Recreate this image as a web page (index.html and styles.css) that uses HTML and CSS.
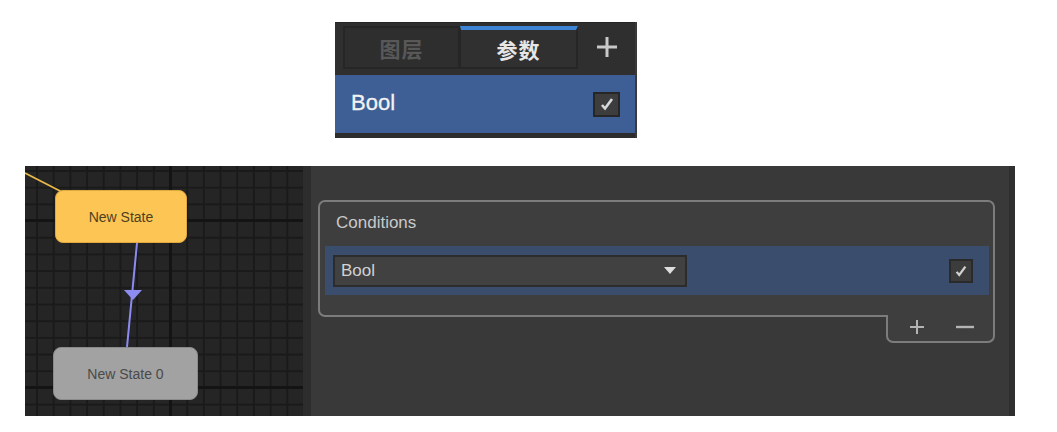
FILE: index.html
```html
<!DOCTYPE html>
<html>
<head>
<meta charset="utf-8">
<link rel="stylesheet" href="styles.css">
</head>
<body>
<div class="page">
  <div class="params">
    <div class="tabs">
      <div class="tab">图层</div>
      <div class="tab active">参数</div>
      <div class="add">
        <svg width="22" height="22" viewBox="0 0 22 22"><path d="M11 1v20M1 11h20" stroke="#c8c8c8" stroke-width="3"/></svg>
      </div>
    </div>
    <div class="param-row">
      <span class="param-name">Bool</span>
      <span class="check big">
        <svg width="16" height="16" viewBox="0 0 16 16"><path d="M3 9l3 3.5 7-9.5" stroke="#d8d8d8" stroke-width="2.6" fill="none"/></svg>
      </span>
    </div>
  </div>

  <div class="editor">
    <div class="graph">
      <svg class="links" width="278" height="250" viewBox="0 0 278 250">
        <line x1="0" y1="7" x2="37" y2="26" stroke="#e9b94a" stroke-width="1.6"/>
        <line x1="112" y1="77" x2="102" y2="181" stroke="#8b8bf2" stroke-width="2"/>
        <polygon points="99,124 117,124 108,134" fill="#8b8bf2"/>
      </svg>
      <div class="node orange" style="left:30px;top:24px;width:132px">New State</div>
      <div class="node gray" style="left:28px;top:181px;width:145px">New State 0</div>
    </div>
    <div class="sep"></div>
    <div class="inspector">
      <div class="conditions">
        <div class="cond-head">Conditions</div>
        <div class="cond-row">
          <div class="dropdown">
            <span>Bool</span>
            <svg width="12" height="7" viewBox="0 0 12 7"><polygon points="0,0 12,0 6,7" fill="#dedede"/></svg>
          </div>
          <span class="check small">
            <svg width="14" height="14" viewBox="0 0 16 16"><path d="M3 9l3 3.5 7-9.5" stroke="#d0d0d0" stroke-width="2.6" fill="none"/></svg>
          </span>
        </div>
      </div>
      <div class="footer">
        <svg width="18" height="18" viewBox="0 0 18 18"><path d="M9 2v14M2 9h14" stroke="#b4b4b4" stroke-width="2"/></svg>
        <svg width="20" height="18" viewBox="0 0 20 18"><path d="M1 9h18" stroke="#b4b4b4" stroke-width="2.4"/></svg>
      </div>
    </div>
  </div>
</div>
</body>
</html>
```
FILE: styles.css
```css
html, body {
  margin: 0;
  padding: 0;
  background: #ffffff;
}
.page {
  padding: 22px 0 0 0;
  font-family: "Liberation Sans", Arial, sans-serif;
}
.params {
  margin-left: 335px;
  width: 300px;
  background: #2c2c2c;
  border-right: 2px solid #3a3a3a;
  padding-bottom: 5px;
}
.tabs {
  display: flex;
  height: 53px;
  box-sizing: border-box;
  padding: 3px 0 7px 8px;
  background: #2f2f2f;
  border-top: 1px solid #262626;
}
.tab {
  width: 117px;
  height: 43px;
  box-sizing: border-box;
  border: 2px solid #262626;
  background: #2e2e2e;
  color: #585858;
  font-family: "Noto Sans CJK SC", sans-serif;
  font-weight: bold;
  font-size: 21px;
  display: flex;
  align-items: center;
  justify-content: center;
  letter-spacing: 1px;
}
.tab.active {
  color: #e6e6e6;
  background: #303030;
  border-top: 4px solid #3e84d6;
  border-left: 1px solid #262626;
  width: 118px;
}
.add {
  flex: 1;
  display: flex;
  align-items: center;
  justify-content: center;
  padding-bottom: 1px;
}
.param-row {
  height: 58px;
  background: #3d5f95;
  display: flex;
  align-items: center;
  justify-content: space-between;
  padding: 0 15px 0 16px;
  box-sizing: border-box;
}
.param-name {
  color: #f2f2f2;
  font-size: 22px;
  padding-bottom: 2px;
  -webkit-text-stroke: 0.3px #f2f2f2;
}
.check {
  display: flex;
  align-items: center;
  justify-content: center;
  box-sizing: border-box;
  background: #3d3d3d;
  border: 2px solid #262626;
}
.check.big {
  width: 27px;
  height: 25px;
}
.check.small {
  width: 24px;
  height: 24px;
  background: #3c3c3c;
  border: 2px solid #2a2a2a;
}
.editor {
  margin: 28px 0 0 25px;
  width: 990px;
  height: 250px;
  display: flex;
}
.graph {
  position: relative;
  width: 278px;
  height: 250px;
  overflow: hidden;
  background-color: #252525;
  background-image:
    linear-gradient(#141414 3px, transparent 3px),
    linear-gradient(90deg, #141414 3px, transparent 3px),
    linear-gradient(#1a1a1a 2px, transparent 2px),
    linear-gradient(90deg, #1a1a1a 2px, transparent 2px);
  background-size: 100% 167px, 167px 100%, 100% 16.7px, 16.7px 100%;
  background-position: 0 53px, 144px 0, 0 4px, 11px 0;
}
.links {
  position: absolute;
  left: 0;
  top: 0;
}
.node {
  position: absolute;
  height: 53px;
  border-radius: 8px;
  display: flex;
  align-items: center;
  justify-content: center;
  font-size: 14px;
  box-sizing: border-box;
}
.node.orange {
  background: #fdc654;
  color: #4f4020;
  border: 1px solid #e0a940;
}
.node.gray {
  background: #a2a2a2;
  color: #4a4a4a;
  border: 1px solid #8a8a8a;
}
.sep {
  width: 8px;
  background: #2d2d2d;
}
.inspector {
  flex: 1;
  background: #393939;
  border-right: 6px solid #2f2f2f;
  padding: 34px 14px 0 7px;
}
.conditions {
  border: 2px solid #7c7c7c;
  border-radius: 7px 7px 0 7px;
  background: #3e3e3e;
  height: 117px;
  box-sizing: border-box;
}
.cond-head {
  height: 44px;
  display: flex;
  align-items: center;
  padding-left: 16px;
  color: #c9c9c9;
  font-size: 17px;
  padding-bottom: 2px;
  box-sizing: border-box;
}
.cond-row {
  height: 49px;
  margin: 0 4px 0 5px;
  background: #3b4d6c;
  display: flex;
  align-items: center;
  justify-content: space-between;
  padding: 0 16px 0 8px;
}
.dropdown {
  width: 354px;
  height: 32px;
  box-sizing: border-box;
  background: #414141;
  border: 2px solid #2c2c2c;
  display: flex;
  align-items: center;
  justify-content: space-between;
  padding: 0 9px 0 6px;
  color: #d2d2d2;
  font-size: 17px;
}
.footer {
  margin: -2px 0 0 auto;
  width: 109px;
  height: 28px;
  box-sizing: border-box;
  border: 2px solid #7c7c7c;
  border-top: none;
  border-radius: 0 0 7px 7px;
  background: #3e3e3e;
  display: flex;
  align-items: center;
  justify-content: space-between;
  padding: 0 18px 2px 20px;
}
```
